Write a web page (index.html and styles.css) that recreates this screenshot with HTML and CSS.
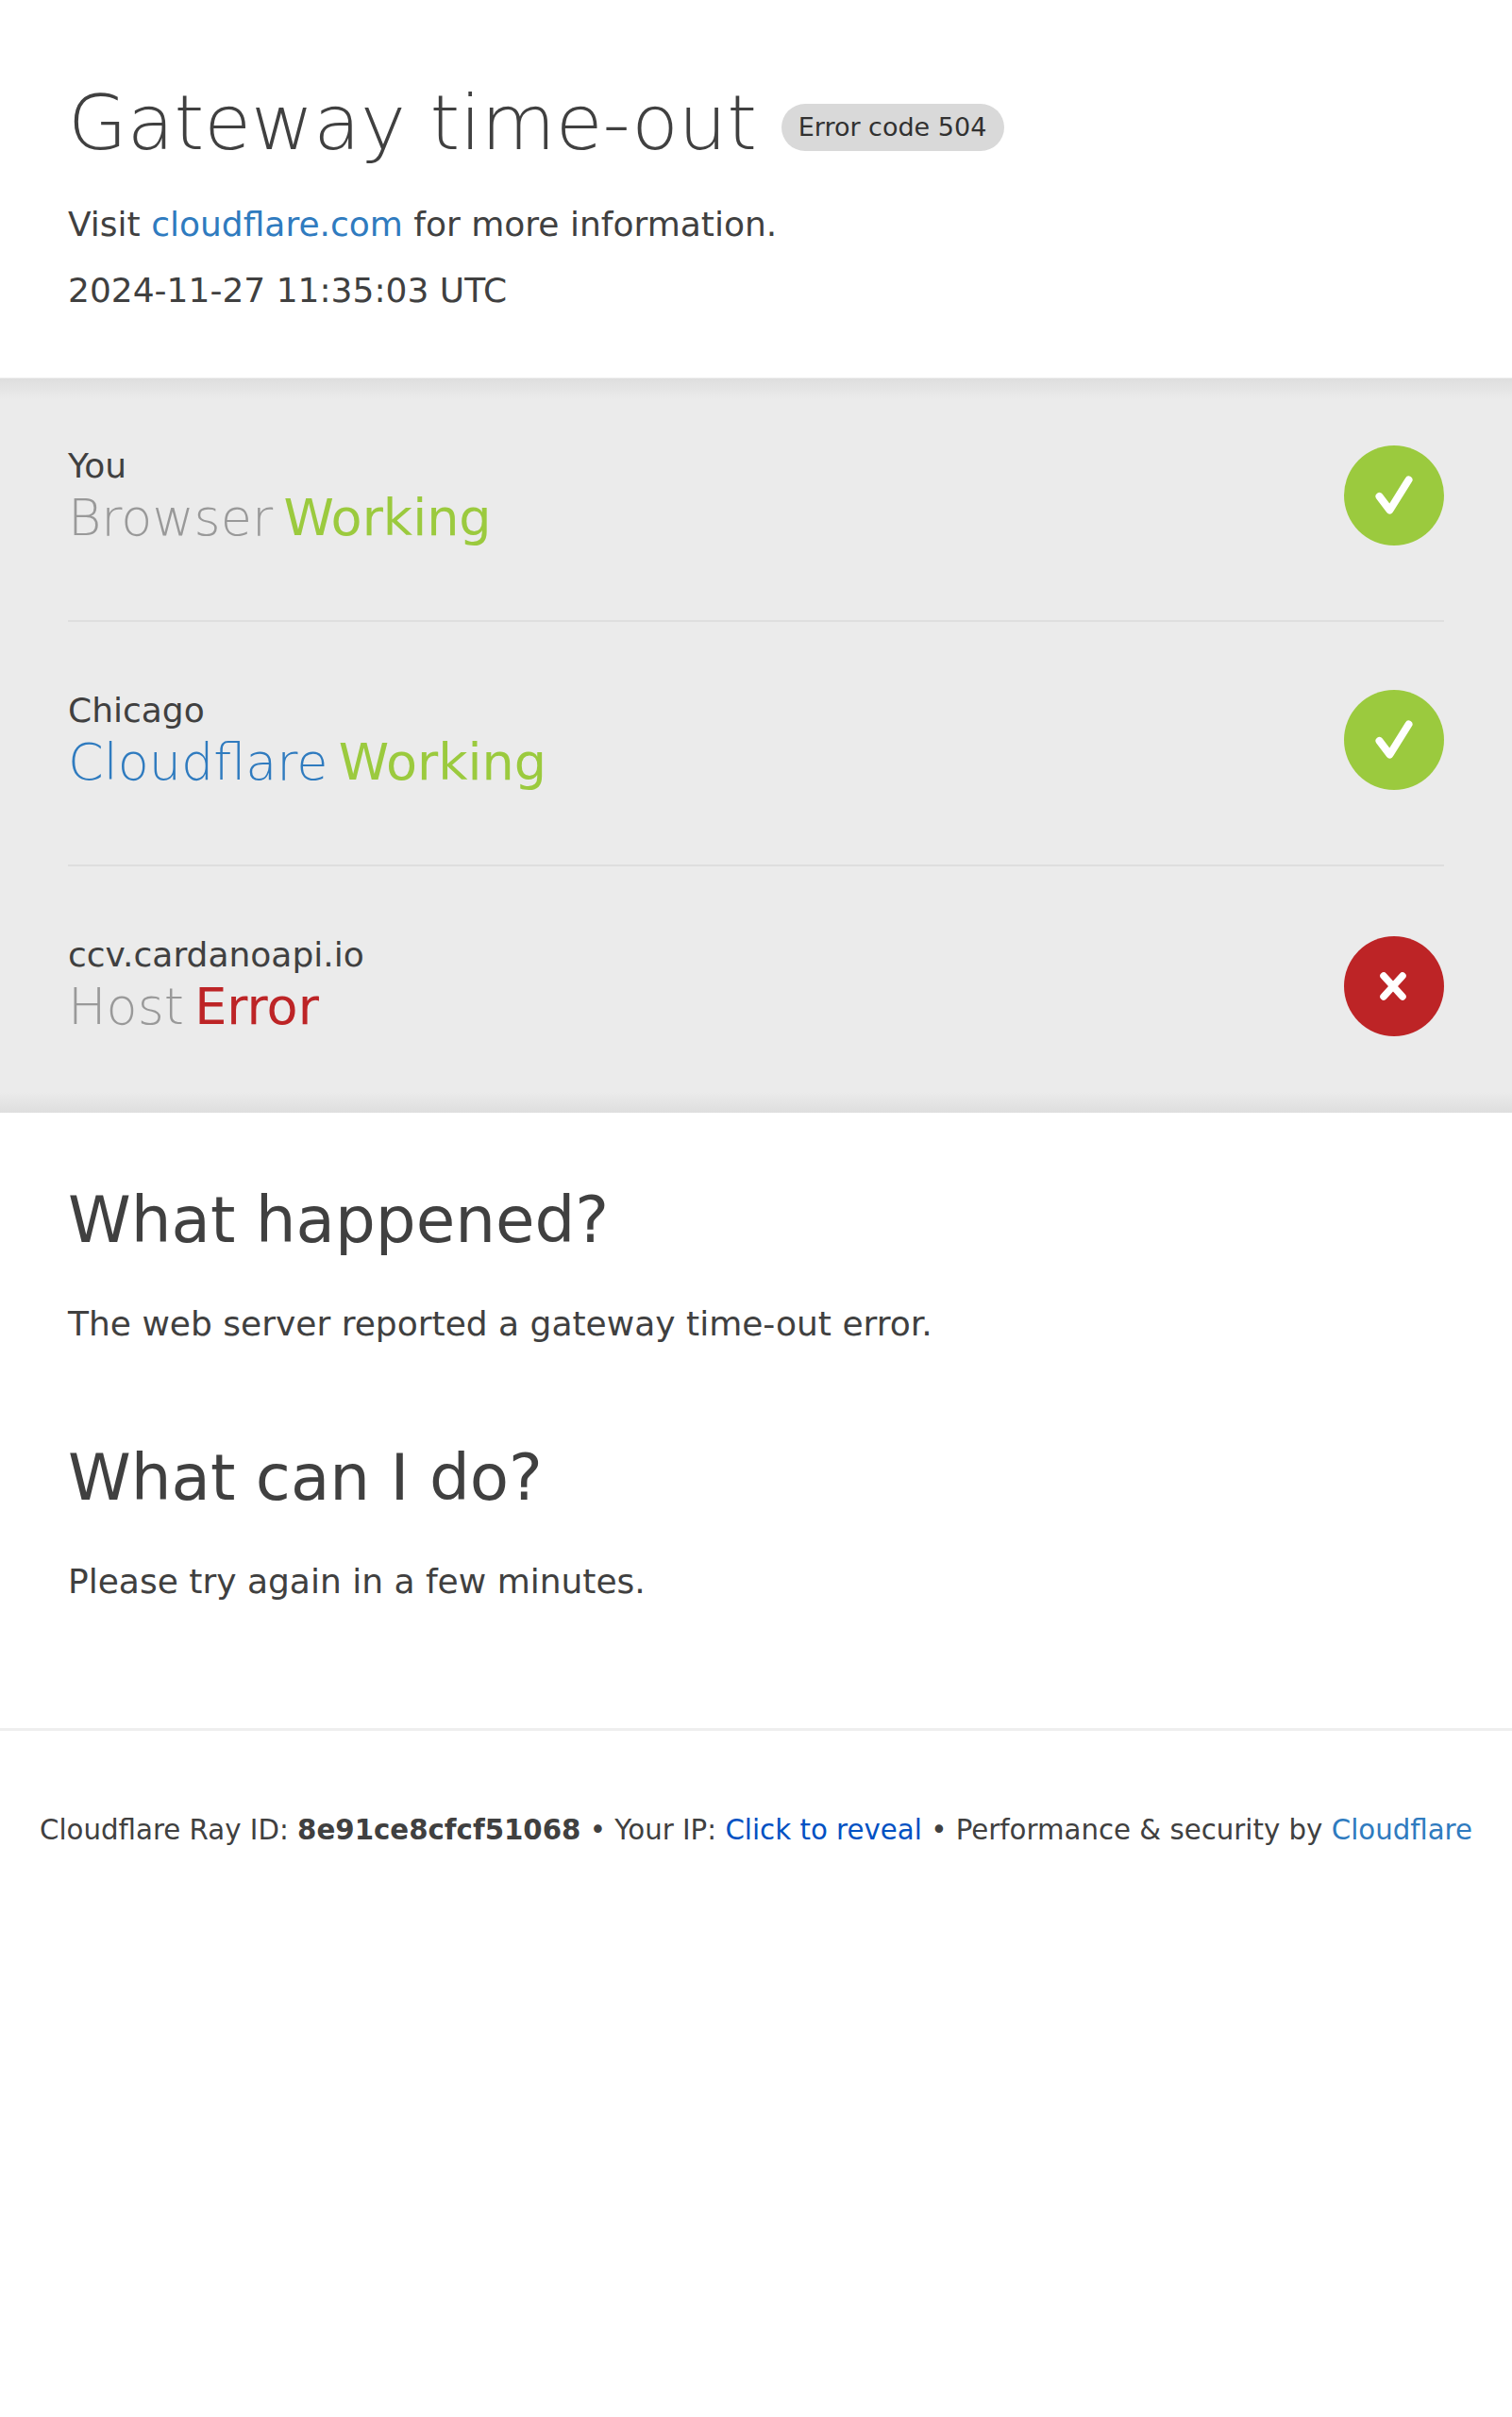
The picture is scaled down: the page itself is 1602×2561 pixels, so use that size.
FILE: index.html
```html
<!DOCTYPE html>
<html lang="en">
<head>
<meta charset="utf-8">
<title>Gateway time-out | Error 504</title>
<link rel="stylesheet" href="styles.css">
</head>
<body>
<header class="intro">
  <div class="title-row">
    <h1 class="title">Gateway time-out</h1>
    <span class="badge">Error code 504</span>
  </div>
  <p class="visit">Visit <a class="link" href="#">cloudflare.com</a> for more information.</p>
  <p class="date">2024-11-27 11:35:03 UTC</p>
</header>
<section class="status">
  <div class="node">
    <div>
      <span class="place">You</span>
      <h3 class="state"><span class="kind">Browser</span><span class="ok">Working</span></h3>
    </div>
    <svg class="icon" viewBox="0 0 106 106"><circle cx="53" cy="53" r="53" fill="#9bca3e"/><path d="M37.500 54L48.500 68.500L68.500 36.500" fill="none" stroke="#fff" stroke-width="8" stroke-linecap="round" stroke-linejoin="round"/></svg>
  </div>
  <div class="node">
    <div>
      <span class="place">Chicago</span>
      <h3 class="state"><a class="kind link" href="#">Cloudflare</a><span class="ok">Working</span></h3>
    </div>
    <svg class="icon" viewBox="0 0 106 106"><circle cx="53" cy="53" r="53" fill="#9bca3e"/><path d="M37.500 54L48.500 68.500L68.500 36.500" fill="none" stroke="#fff" stroke-width="8" stroke-linecap="round" stroke-linejoin="round"/></svg>
  </div>
  <div class="node last">
    <div>
      <span class="place">ccv.cardanoapi.io</span>
      <h3 class="state"><span class="kind">Host</span><span class="bad">Error</span></h3>
    </div>
    <svg class="icon" viewBox="0 0 106 106"><circle cx="53" cy="53" r="53" fill="#bd2426"/><path d="M42 42L62 64M62 42L42 64" fill="none" stroke="#fff" stroke-width="7.500" stroke-linecap="round"/></svg>
  </div>
</section>
<main class="details">
  <section class="block">
    <h2 class="heading">What happened?</h2>
    <p class="text">The web server reported a gateway time-out error.</p>
  </section>
  <section class="block">
    <h2 class="heading">What can I do?</h2>
    <p class="text">Please try again in a few minutes.</p>
  </section>
</main>
<footer class="footer">Cloudflare Ray ID: <strong>8e91ce8cfcf51068</strong> • Your IP: <a class="reveal" href="#">Click to reveal</a> • Performance &amp; security by <a class="link" href="#">Cloudflare</a></footer>
</body>
</html>
```
FILE: styles.css
```css
* { box-sizing: border-box; margin: 0; padding: 0; }
body {
  background: #fff;
  color: #404040;
  font: 36px/54px "DejaVu Sans", sans-serif;
}
a { text-decoration: none; }
.intro { height: 401px; padding: 80px 72px 0; border-bottom: 1px solid #efefef; }
.title-row { display: flex; align-items: flex-start; gap: 25.75px; }
.title { font-size: 81px; line-height: 100px; font-weight: 200; }
.badge {
  margin-top: 30px;
  padding: 0 18.5px 0 18px;
  border-radius: 25px;
  background: #d9d9d9;
  color: #313131;
  font-size: 27px;
  line-height: 50px;
}
.visit { margin-top: 31px; }
.date { margin-top: 16px; }
.link { color: #2f7bbf; }
.status {
  height: 778px;
  padding: 0 72px;
  background:
    linear-gradient(to bottom, #dedede, #ebebeb 22px, transparent 22px),
    linear-gradient(to top, #dedede, #ebebeb 22px, transparent 22px),
    #ebebeb;
}
.node {
  display: flex;
  justify-content: space-between;
  height: 258px;
  padding-top: 66px;
  border-bottom: 2px solid #dedede;
}
.node + .node { height: 259px; padding-top: 67px; }
.node.last { height: 261px; border-bottom: 0; }
.place { display: block; line-height: 54px; }
.state { margin-top: 1px; font-size: 54px; line-height: 54px; font-weight: 400; }
.kind { margin-right: 11.25px; color: #999; font-weight: 200; }
.kind.link { color: #2f7bbf; }
.ok { color: #9bca3e; }
.bad { color: #bd2426; }
.icon { width: 106px; height: 106px; margin-top: 5px; }
.last .icon { margin-top: 7px; }
.details { height: 652px; padding: 72px 72px 0; }
.block { height: 273px; }
.heading { font-size: 67.5px; line-height: 84px; font-weight: 400; }
.text { margin-top: 41px; }
.footer {
  padding-top: 78px;
  border-top: 3px solid #eee;
  font-size: 29.25px;
  line-height: 54px;
  text-align: center;
  white-space: nowrap;
}
.reveal { color: #0051c3; }
```
